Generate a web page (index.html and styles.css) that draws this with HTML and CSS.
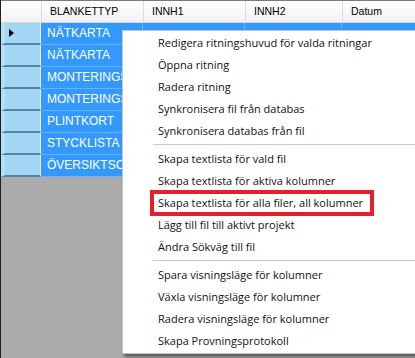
FILE: index.html
```html
<!DOCTYPE html>
<html lang="sv">
<head>
    <meta charset="UTF-8">
    <title>Ritningar</title>
    <link rel="stylesheet" href="styles.css">
</head>
<body>
    <div class="grid">
        <div class="grid-head">
            <div class="corner"></div>
            <div class="hcell c1">BLANKETTYP</div>
            <div class="hcell c2">INNH1</div>
            <div class="hcell c3">INNH2</div>
            <div class="hcell c4">Datum</div>
        </div>

        <div class="row current">
            <div class="rowhead"><span class="arrow"></span></div>
            <div class="cell c1">NÄTKARTA</div>
            <div class="cell c2"></div>
            <div class="cell c3"></div>
            <div class="cell c4"></div>
        </div>
        <div class="row">
            <div class="rowhead"></div>
            <div class="cell c1">NÄTKARTA</div>
            <div class="cell c2 empty"></div>
            <div class="cell c3 empty"></div>
            <div class="cell c4 empty"></div>
        </div>
        <div class="row">
            <div class="rowhead"></div>
            <div class="cell c1">MONTERINGSRITNING</div>
            <div class="cell c2 empty"></div>
            <div class="cell c3 empty"></div>
            <div class="cell c4 empty"></div>
        </div>
        <div class="row">
            <div class="rowhead"></div>
            <div class="cell c1">MONTERINGSRITNING</div>
            <div class="cell c2 empty"></div>
            <div class="cell c3 empty"></div>
            <div class="cell c4 empty"></div>
        </div>
        <div class="row">
            <div class="rowhead"></div>
            <div class="cell c1">PLINTKORT</div>
            <div class="cell c2 empty"></div>
            <div class="cell c3 empty"></div>
            <div class="cell c4 empty"></div>
        </div>
        <div class="row">
            <div class="rowhead"></div>
            <div class="cell c1">STYCKLISTA</div>
            <div class="cell c2 empty"></div>
            <div class="cell c3 empty"></div>
            <div class="cell c4 empty"></div>
        </div>
        <div class="row">
            <div class="rowhead"></div>
            <div class="cell c1">ÖVERSIKTSCHEMA</div>
            <div class="cell c2 empty"></div>
            <div class="cell c3 empty"></div>
            <div class="cell c4 empty"></div>
        </div>
    </div>

    <div class="menu">
        <div class="item">Redigera ritningshuvud för valda ritningar</div>
        <div class="item">Öppna ritning</div>
        <div class="item">Radera ritning</div>
        <div class="item">Synkronisera fil från databas</div>
        <div class="item">Synkronisera databas från fil</div>
        <div class="sep"></div>
        <div class="item">Skapa textlista för vald fil</div>
        <div class="item">Skapa textlista för aktiva kolumner</div>
        <div class="item marked">Skapa textlista för alla filer, all kolumner</div>
        <div class="item">Lägg till fil till aktivt projekt</div>
        <div class="item">Ändra Sökväg till fil</div>
        <div class="sep"></div>
        <div class="item">Spara visningsläge för kolumner</div>
        <div class="item">Växla visningsläge för kolumner</div>
        <div class="item">Radera visningsläge för kolumner</div>
        <div class="item">Skapa Provningsprotokoll</div>
    </div>
</body>
</html>
```

FILE: styles.css
```css
html, body {
    margin: 0;
    height: 100%;
    overflow: hidden;
}

body {
    background: #ababab;
    border-left: 1px solid #1e1e1e;
    font-family: 'Liberation Sans', Arial, sans-serif;
    position: relative;
}

.grid {
    width: 520px;
    border-top: 1px solid #7a7a7a;
}

.grid-head {
    display: flex;
    height: 21px;
    background: linear-gradient(#ffffff, #f2f2f2);
    border-bottom: 1px solid #d6d6d6;
}

.corner {
    width: 40px;
    border-right: 1px solid #dcdcdc;
}

.hcell {
    box-sizing: border-box;
    padding-left: 8px;
    font-size: 10.5px;
    line-height: 21px;
    color: #000;
    border-right: 1px solid #dcdcdc;
}

.c1 { width: 102px; }
.c2 { width: 102px; }
.c3 { width: 97px; }
.c4 { flex: 1; }

.row {
    display: flex;
    height: 22px;
}

.rowhead {
    box-sizing: border-box;
    width: 40px;
    background: #a2d6f4;
    border-left: 4px solid #b6e0f8;
    border-right: 1px solid #e4f1fb;
    border-bottom: 2px solid #57839f;
    position: relative;
}

.arrow {
    position: absolute;
    left: 4px;
    top: 6px;
    border-top: 4px solid transparent;
    border-bottom: 4px solid transparent;
    border-left: 5px solid #000;
}

.cell {
    box-sizing: border-box;
    padding-left: 6px;
    font-size: 12px;
    line-height: 21px;
    color: #fff;
    white-space: nowrap;
    overflow: hidden;
    background: #3399ff;
    border-bottom: 1px solid #6cb2f6;
    border-right: 1px solid #6cb2f6;
}

.cell.empty {
    background: #fff;
    border-color: #e4e4e4;
}

/* context menu */
.menu {
    position: absolute;
    left: 121px;
    top: 30px;
    width: 320px;
    padding: 1px 0;
    background: #fff;
    border: 1px solid #c4c4c4;
    box-shadow: 2px 3px 3px rgba(0,0,0,0.45);
    font-family: 'Open Sans', 'Noto Sans', sans-serif;
    font-size: 11px;
    color: #111;
}

.item {
    height: 22px;
    line-height: 22px;
    padding-left: 35px;
    white-space: nowrap;
    position: relative;
}

.item.marked::after {
    content: '';
    position: absolute;
    left: 27px;
    top: -2px;
    width: 224px;
    height: 26px;
    box-sizing: border-box;
    border: 4px solid #e3202b;
}

.sep {
    height: 1px;
    margin: 2px 0 3px 30px;
    background: #c9c9c9;
}
```
